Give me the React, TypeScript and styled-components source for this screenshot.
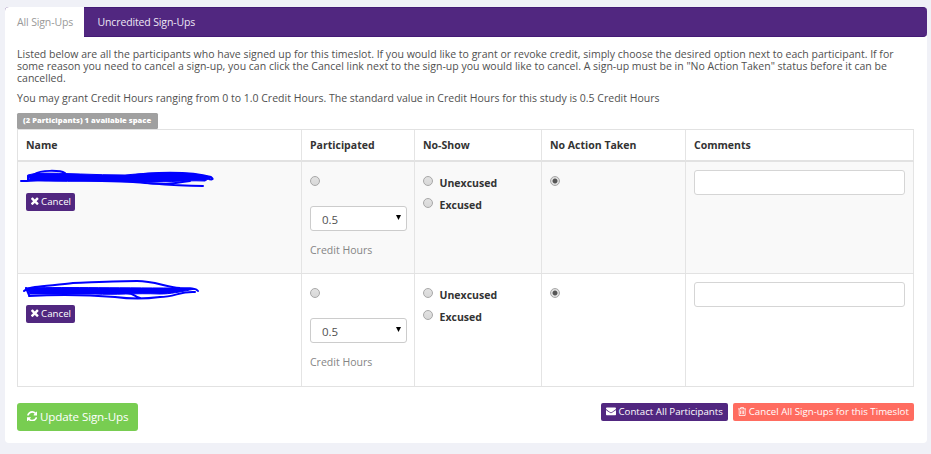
import React from "react";
import styled, { createGlobalStyle } from "styled-components";

const Global = createGlobalStyle`
  * { box-sizing: border-box; }
  body { margin: 0; background: #f0f1f7; font-family: "Open Sans", "Noto Sans", sans-serif; font-size: 10.53px; color: #505050; }
  p { margin: 0; }
`;

const Page = styled.div`
  height: 454px;
  padding: 6.5px 4.5px 11px 5px;
  overflow: hidden;
`;
const Panel = styled.main`
  height: 436px;
  background: #fff;
  border-radius: 4px;
`;
const TabBar = styled.nav`
  display: flex;
  height: 30px;
  background: #512780;
  border-top: 1px solid #431a75;
  border-bottom: 1px solid #431a75;
  border-radius: 4px;
`;
const Tab = styled.a<{ $active?: boolean; $width: number }>`
  width: ${(p) => p.$width}px;
  margin: -1px 0;
  padding-left: ${(p) => (p.$active ? 12 : 13.5)}px;
  line-height: 30px;
  white-space: nowrap;
  letter-spacing: -0.14px;
  color: ${(p) => (p.$active ? "#999" : "#eee8f5")};
  background: ${(p) => (p.$active ? "#fff" : "transparent")};
  border-radius: ${(p) => (p.$active ? "4px 0 0 0" : "0")};
`;
const Content = styled.section`
  padding: 11.5px 12.5px 0 12px;
`;
const Intro = styled.p<{ $gap?: number }>`
  line-height: 12px;
  margin-bottom: ${(p) => p.$gap ?? 0}px;
  white-space: nowrap;
`;
const Line = styled.span`
  display: block;
`;
const Badge = styled.div`
  width: 141px;
  height: 16px;
  padding-left: 6px;
  line-height: 15.5px;
  border-radius: 1.5px;
  background: #a0a0a0;
  color: #fff;
  font-size: 7.6px;
  font-weight: 800;
  white-space: nowrap;
`;
const Row = styled.div<{ $height: number; $striped?: boolean; $head?: boolean }>`
  display: grid;
  grid-template-columns: 284px 113px 127px 144px 228px;
  height: ${(p) => p.$height}px;
  background: ${(p) => (p.$striped ? "#f9f9f9" : "#fff")};
  border-bottom: ${(p) => (p.$head ? 2 : 1)}px solid #e2e2e2;
`;
const Table = styled.div`
  width: 897px;
  border-top: 1px solid #e2e2e2;
  border-left: 1px solid #e2e2e2;
`;
const Cell = styled.div`
  padding: 8px;
  border-right: 1px solid #e4e4e4;
  min-width: 0;
`;
const HeadCell = styled(Cell)`
  padding: 0 8px;
  line-height: 31px;
  font-weight: 700;
  color: #333;
  white-space: nowrap;
`;
const Redaction = styled.svg`
  display: block;
  width: 205px;
  height: 28px;
  margin: -5px 0 0 -11px;
  overflow: visible;
`;
const Button = styled.button<{ $tone: string; $width: number; $large?: boolean }>`
  display: flex;
  align-items: center;
  gap: ${(p) => (p.$large ? 3 : 2.5)}px;
  width: ${(p) => p.$width}px;
  height: ${(p) => (p.$large ? 28 : 18)}px;
  padding: 0 0 1px ${(p) => (p.$large ? 9.5 : 5)}px;
  border: 0;
  border-radius: ${(p) => (p.$large ? 3 : 2)}px;
  background: ${(p) => p.$tone};
  color: #fff;
  font-family: inherit;
  font-size: ${(p) => (p.$large ? 11.6 : 9.7)}px;
  letter-spacing: ${(p) => (p.$large ? -0.12 : 0)}px;
  white-space: nowrap;
`;
const Glyph = styled.svg`
  flex: none;
  fill: currentColor;
`;
const Radio = styled.span<{ $checked?: boolean }>`
  display: block;
  flex: none;
  width: 10px;
  height: 10px;
  border: 1px solid #a8a8a8;
  border-radius: 50%;
  background: ${(p) =>
    p.$checked
      ? "radial-gradient(circle, #555 0 2px, #dcdcdc 2.9px)"
      : "linear-gradient(#e2e2e2, #d8d8d8)"};
`;
const RadioSlot = styled.div`
  padding-top: 6px;
`;
const Choice = styled.label`
  display: flex;
  gap: 6.5px;
  height: 22px;
  padding-top: 6px;
  font-weight: 700;
  color: #333;
  line-height: 14px;
`;
const Select = styled.div`
  display: flex;
  align-items: center;
  justify-content: space-between;
  width: 97px;
  height: 25px;
  margin-top: 20px;
  padding: 3px 5px 0 11px;
  border: 1px solid #ccc;
  border-radius: 3px;
  background: #fff;
  font-size: 11.5px;
`;
const Arrow = styled.svg`
  width: 5px;
  height: 5px;
  margin-bottom: 5px;
`;
const Help = styled.p`
  margin-top: 12px;
  line-height: 15px;
  color: #858585;
`;
const Field = styled.input`
  display: block;
  width: 211px;
  height: 25px;
  border: 1px solid #d5d5d5;
  border-radius: 3px;
  background: #fff;
`;
const Footer = styled.footer`
  display: flex;
  gap: 5px;
  align-items: flex-start;
  margin-top: 16px;
  padding-right: 0.5px;
`;
const Spacer = styled.span`
  flex: 1;
`;

const icons = {
  times:
    "M1490 1322q0 40-28 68l-136 136q-28 28-68 28t-68-28l-294-294-294 294q-28 28-68 28t-68-28l-136-136q-28-28-28-68t28-68l294-294-294-294q-28-28-28-68t28-68l136-136q28-28 68-28t68 28l294 294 294-294q28-28 68-28t68 28l136 136q28 28 28 68t-28 68l-294 294 294 294q28 28 28 68z",
  refresh:
    "M1639 1056q0 5-1 7-64 268-268 434.5t-478 166.5q-146 0-282.5-55t-243.5-157l-129 129q-19 19-45 19t-45-19-19-45v-448q0-26 19-45t45-19h448q26 0 45 19t19 45-19 45l-137 137q71 66 161 102t187 36q134 0 250-65t186-179q11-17 53-117 8-23 30-23h192q13 0 22.5 9.5t9.5 22.5zm25-800v448q0 26-19 45t-45 19h-448q-26 0-45-19t-19-45 19-45l138-138q-148-137-349-137-134 0-250 65t-186 179q-11 17-53 117-8 23-30 23h-199q-13 0-22.5-9.5t-9.5-22.5v-7q65-268 270-434.5t480-166.5q146 0 284 55.5t245 156.5l130-129q19-19 45-19t45 19 19 45z",
  envelope:
    "M1792 710v794q0 66-47 113t-113 47h-1472q-66 0-113-47t-47-113v-794q44 49 101 87 362 246 497 345 57 42 92.5 65.5t94.5 48 110 24.5h2q51 0 110-24.5t94.5-48 92.5-65.5q170-123 498-345 57-39 100-87zm0-294q0 79-49 151t-122 123q-376 261-468 325-10 7-42.5 30.5t-54 38-52 32.5-57.5 27-50 9h-2q-23 0-50-9t-57.5-27-52-32.5-54-38-42.5-30.5q-91-64-262-182.5t-205-142.5q-62-42-117-115.5t-55-136.5q0-78 41.5-130t118.5-52h1472q65 0 112.500 47t47.5 113z",
  trash:
    "M704 736v576q0 14-9 23t-23 9h-64q-14 0-23-9t-9-23v-576q0-14 9-23t23-9h64q14 0 23 9t9 23zm256 0v576q0 14-9 23t-23 9h-64q-14 0-23-9t-9-23v-576q0-14 9-23t23-9h64q14 0 23 9t9 23zm256 0v576q0 14-9 23t-23 9h-64q-14 0-23-9t-9-23v-576q0-14 9-23t23-9h64q14 0 23 9t9 23zm128 724v-948h-896v948q0 22 7 40.5t14.5 27 10.5 8.5h832q3 0 10.5-8.5t14.5-27 7-40.5zm-672-1076h448l-48-117q-7-9-17-11h-317q-10 2-17 11zm928 32v64q0 14-9 23t-23 9h-96v948q0 83-47 143.5t-113 60.5h-832q-66 0-113-58.5t-47-141.5v-952h-96q-14 0-23-9t-9-23v-64q0-14 9-23t23-9h309l70-167q15-37 54-63t79-26h320q40 0 79 26t54 63l70 167h309q14 0 23 9t9 23z",
};

function Icon({ name, size, box = "0 0 1792 1792" }: { name: keyof typeof icons; size: number; box?: string }) {
  const [, , w, h] = box.split(" ").map(Number);
  return (
    <Glyph width={(size * w) / h} height={size} viewBox={box}>
      <path d={icons[name]} />
    </Glyph>
  );
}

const scribbles = [
  {
    mass: "M13 10 L22 8 C50 8 80 10 110 10 C130 8 160 7 180 9 L196 12 L190 16 C165 15 150 18 120 17 C90 15 60 17 30 16 L15 15Z",
    strokes:
      "M6 16 C18 16 35 14 55 15 S100 16 118 17 S155 21 188 21 M20 9 C25 5 45 5 50 8 M115 11 C135 7 175 6 196 12 C200 15 196 15 192 13 M130 18 C145 20 155 19 175 16 M13 11 V15",
  },
  {
    mass: "M11 11 C40 10 100 11 160 11 L180 12 C165 15 155 17 145 17 C120 16 100 18 80 17 L15 17Z",
    strokes:
      "M9 14 C15 8 40 9 58 6 C85 5 105 4 122 4 C140 4 150 10 165 11 C175 11 181 11 183 14 M180 15 C165 14 160 20 145 20 C130 22 115 22 100 20 C75 18 50 17 14 19 M11 11 L14 18 M112 16 C120 17 118 19 125 21",
  },
];

function Participant({ index }: { index: number }) {
  const scribble = scribbles[index];
  return (
    <Row $height={index === 0 ? 112 : 113} $striped={index === 0}>
      <Cell>
        <Redaction viewBox="0 0 205 28" fill="none" stroke="#0000fe" strokeWidth="2" strokeLinecap="round" strokeLinejoin="round">
          <path d={scribble.mass} fill="#0000fe" strokeWidth="1" />
          <path d={scribble.strokes} />
        </Redaction>
        <Button $tone="#512780" $width={49}>
          <Icon name="times" size={8} box="302 302 1188 1252" />Cancel
        </Button>
      </Cell>
      <Cell>
        <RadioSlot><Radio /></RadioSlot>
        <Select>
          0.5
          <Arrow viewBox="0 0 5 5"><path d="M0 0H5L2.5 5Z" /></Arrow>
        </Select>
        <Help>Credit Hours</Help>
      </Cell>
      <Cell>
        <Choice><Radio />Unexcused</Choice>
        <Choice><Radio />Excused</Choice>
      </Cell>
      <Cell>
        <RadioSlot><Radio $checked /></RadioSlot>
      </Cell>
      <Cell><Field /></Cell>
    </Row>
  );
}

export default function App() {
  return (
    <Page>
      <Global />
      <Panel>
        <TabBar>
          <Tab $active $width={79}>All Sign-Ups</Tab>
          <Tab $width={140}>Uncredited Sign-Ups</Tab>
        </TabBar>
        <Content>
          <Intro $gap={8}>
            <Line>Listed below are all the participants who have signed up for this timeslot. If you would like to grant or revoke credit, simply choose the desired option next to each participant. If for</Line>
            <Line>some reason you need to cancel a sign-up, you can click the Cancel link next to the sign-up you would like to cancel. A sign-up must be in "No Action Taken" status before it can be</Line>
            <Line>cancelled.</Line>
          </Intro>
          <Intro $gap={8.5}>
            <Line>You may grant Credit Hours ranging from 0 to 1.0 Credit Hours. The standard value in Credit Hours for this study is 0.5 Credit Hours</Line>
          </Intro>
          <Badge>(2 Participants) 1 available space</Badge>
          <Table>
            <Row $height={32} $head>
              <HeadCell>Name</HeadCell>
              <HeadCell>Participated</HeadCell>
              <HeadCell>No-Show</HeadCell>
              <HeadCell>No Action Taken</HeadCell>
              <HeadCell>Comments</HeadCell>
            </Row>
            <Participant index={0} />
            <Participant index={1} />
          </Table>
          <Footer>
            <Button $tone="#78cd51" $width={121} $large>
              <Icon name="refresh" size={10.5} box="128 128 1536 1536" />Update Sign-Ups
            </Button>
            <Spacer />
            <Button $tone="#512780" $width={127}>
              <Icon name="envelope" size={10} />Contact All Participants
            </Button>
            <Button $tone="#ff6c60" $width={180.5}>
              <Icon name="trash" size={9} box="192 128 1408 1536" />Cancel All Sign-ups for this Timeslot
            </Button>
          </Footer>
        </Content>
      </Panel>
    </Page>
  );
}
